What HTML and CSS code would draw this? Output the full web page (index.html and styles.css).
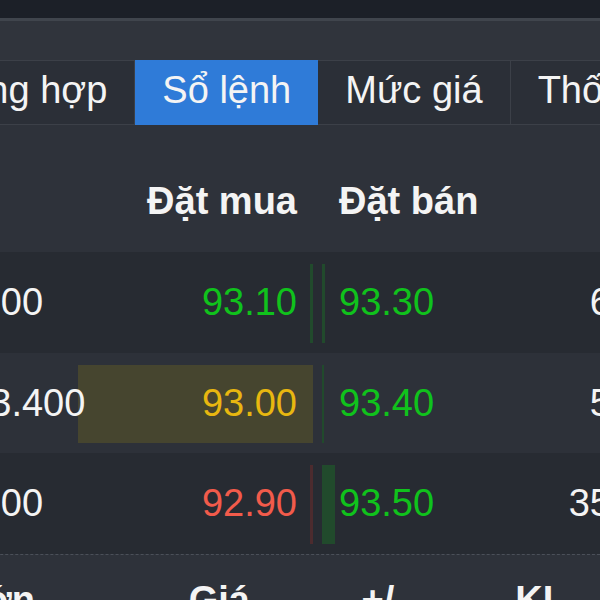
FILE: index.html
```html
<!DOCTYPE html>
<html lang="vi">
<head>
<meta charset="utf-8">
<title>Sổ lệnh</title>
<link rel="stylesheet" href="styles.css">
</head>
<body>
<div class="topbar"></div>
<div class="strip"></div>
<nav class="tabs">
  <div class="tab">Tổng hợp</div>
  <div class="tab active">Sổ lệnh</div>
  <div class="tab">Mức giá</div>
  <div class="tab">Thống kê</div>
</nav>
<section class="book">
  <div class="row head">
    <div class="bid"><span class="vol"></span><span class="price">Đặt mua</span></div>
    <div class="mid"></div>
    <div class="ask"><span class="price">Đặt bán</span><span class="vol"></span></div>
  </div>
  <div class="row odd">
    <div class="bid"><i class="bar bar-green" style="width:3px"></i><span class="vol">9.600</span><span class="price up">93.10</span></div>
    <div class="mid"></div>
    <div class="ask"><i class="bar bar-green" style="width:3px"></i><span class="price up">93.30</span><span class="vol">61.200</span></div>
  </div>
  <div class="row even">
    <div class="bid"><i class="bar bar-yellow" style="width:235px"></i><span class="vol">123.400</span><span class="price ref">93.00</span></div>
    <div class="mid"></div>
    <div class="ask"><i class="bar bar-green" style="width:2px"></i><span class="price up">93.40</span><span class="vol">52.800</span></div>
  </div>
  <div class="row odd">
    <div class="bid"><i class="bar bar-red" style="width:3px"></i><span class="vol">7.200</span><span class="price down">92.90</span></div>
    <div class="mid"></div>
    <div class="ask"><i class="bar bar-green" style="width:13px"></i><span class="price up">93.50</span><span class="vol">351.600</span></div>
  </div>
</section>
<section class="trades">
  <div class="thead">
    <span>Lớn</span>
    <span>Giá</span>
    <span>+/-</span>
    <span>KL</span>
  </div>
</section>
</body>
</html>
```

FILE: styles.css
```css
* { box-sizing: border-box; }

html, body {
  margin: 0;
  padding: 0;
  width: 600px;
  height: 600px;
  overflow: hidden;
  background: #2e323a;
  font-family: "Liberation Sans", Arial, sans-serif;
  color: #f4f4f4;
  font-size: 38px;
}

.topbar {
  height: 21px;
  background: #1c2028;
  border-bottom: 3px solid #40454d;
}

.strip {
  height: 39px;
  background: #30343c;
}

.tabs {
  display: flex;
  height: 65px;
  margin-left: -84px;
  background: #2b2f37;
  border-top: 1px solid #3c4048;
  border-bottom: 1px solid #3c4048;
}

.tab {
  flex: none;
  padding: 0 27px 5px;
  line-height: 58px;
  border-right: 1px solid #3c4048;
  white-space: nowrap;
}

.tab.active {
  background: #2f7bd8;
  margin: -1px 0;
  padding-top: 1px;
  border-right: none;
}

.book {
  margin-left: -70px;
  width: 776px;
}

.row {
  display: grid;
  grid-template-columns: 383px 9px 1fr;
}

.row.head {
  height: 127px;
  padding-top: 55px;
  line-height: 42px;
  font-weight: bold;
  background: #2e323a;
}

.row.odd {
  height: 101px;
  line-height: 101px;
  background: #272b32;
}

.row.even {
  height: 100px;
  line-height: 100px;
  background: #2d3139;
}

.bid, .ask {
  position: relative;
  display: flex;
  white-space: nowrap;
}

.bid {
  padding: 0 16px 0 18px;
}

.bid .vol { flex: 1; }

.ask {
  padding-left: 17px;
}

.ask .vol {
  margin-left: auto;
}

.vol, .price {
  position: relative;
}

.bar {
  position: absolute;
  top: 12px;
  bottom: 10px;
}

.bid .bar { right: 0; }
.ask .bar { left: 0; }

.bar-green { background: #214a2c; }
.bar-yellow { background: #46452f; }
.bar-red { background: #4c2b2e; }

.up { color: #10c21c; }
.ref { color: #e8b710; }
.down { color: #f25b4b; }

.trades {
  margin-left: -70px;
  border-top: 1px dashed #4b5059;
  background: #2e323a;
  height: 100px;
}

.thead {
  display: grid;
  grid-template-columns: 105px 215px 157px 159px 1fr;
  padding-top: 24px;
  line-height: 42px;
  font-weight: bold;
  text-align: right;
  white-space: nowrap;
}
```
